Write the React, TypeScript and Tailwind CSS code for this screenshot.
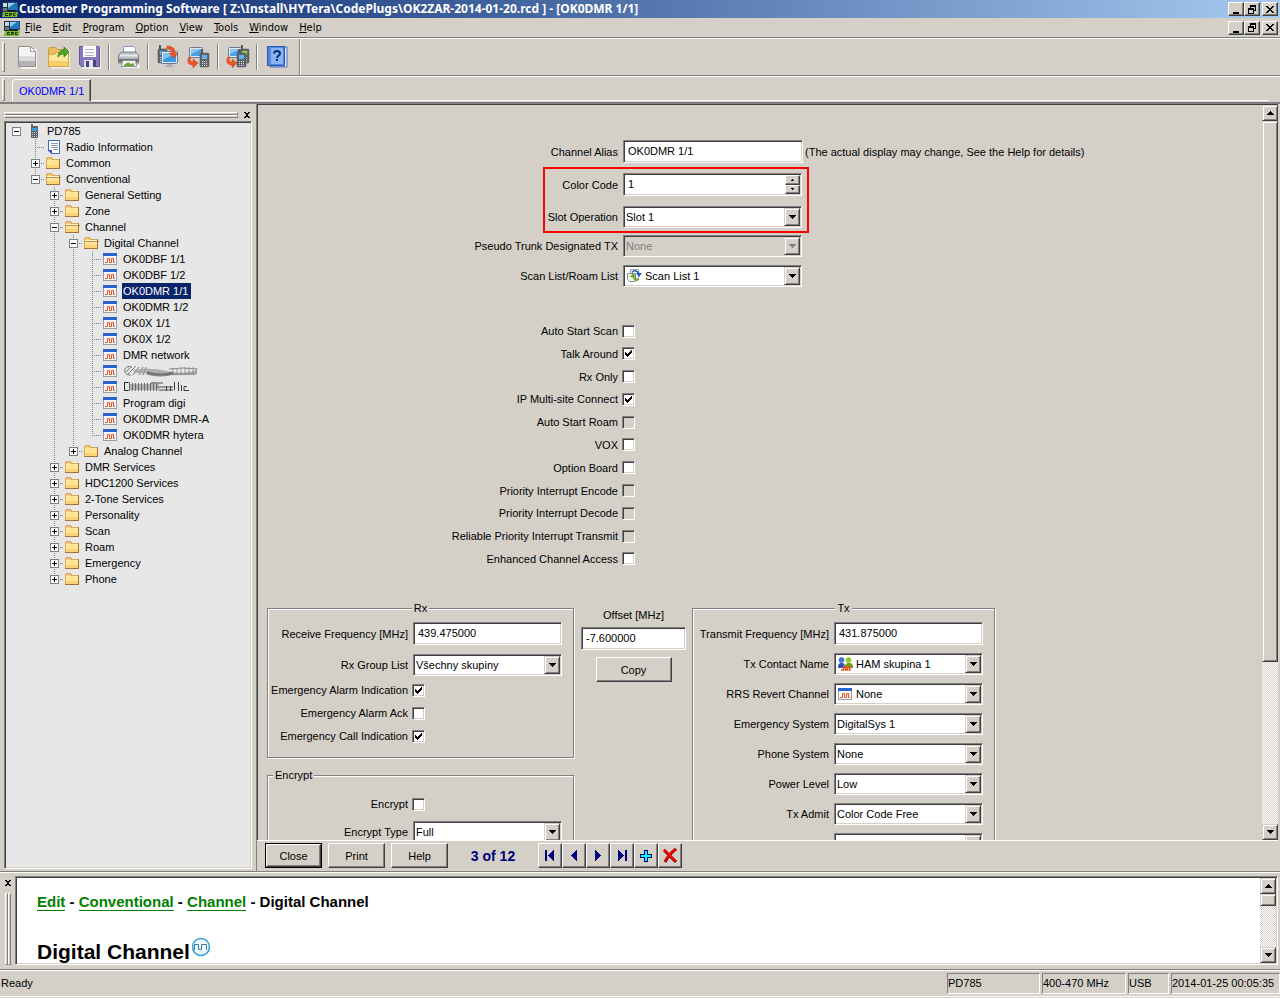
import { useState, type ReactNode } from "react";

const sunken =
  "border border-t-[#808080] border-l-[#808080] border-r-white border-b-white p-px shadow-[inset_1px_1px_0_#404040,inset_-1px_-1px_0_#d4d0c8]";
const raised =
  "bg-[#d4d0c8] border border-t-white border-l-white border-r-[#404040] border-b-[#404040] shadow-[inset_-1px_-1px_0_#808080]";
const scrollPart =
  "bg-[#d4d0c8] border border-t-[#d4d0c8] border-l-[#d4d0c8] border-r-[#404040] border-b-[#404040] shadow-[inset_1px_1px_0_#fff,inset_-1px_-1px_0_#808080]";
const dither = "bg-[repeating-conic-gradient(#ffffff_0_25%,#d4d0c8_0_50%)] bg-[length:2px_2px]";

/* ---------- icons ---------- */

function AppIcon() {
  return (
    <svg width="16" height="16" viewBox="0 0 16 16" className="shrink-0">
      <rect x="5" y="1" width="11" height="9" fill="#2c4f7c" />
      <rect x="6" y="2" width="9" height="7" fill="#1f78b8" />
      <path d="M6 2h7L6 7z" fill="#8fd0f0" />
      <rect x="0" y="1" width="6" height="10" fill="#2b303a" />
      <rect x="1" y="2" width="4" height="4" fill="#b9dcee" />
      <rect x="1" y="7" width="4" height="3" fill="#6d7480" />
      <rect x="6" y="9" width="8" height="2" fill="#12202e" />
      <path d="M1 11h15l-1 5H0z" fill="#7cb82a" />
      <path d="M6 12.500H3.500v2H6M7.500 15v-2.500h2v1.500h-2M13.500 12.500h-2v2h2" stroke="#16300a" fill="none" />
    </svg>
  );
}

function ArrowGlyph({ up = false, muted = false }: { up?: boolean; muted?: boolean }) {
  return (
    <svg width="7" height="4" viewBox="0 0 7 4" shapeRendering="crispEdges">
      <path d={up ? "M3 0h1v1h1v1h1v1h1v1H0V3h1V2h1V1h1z" : "M0 0h7v1H6v1H5v1H4v1H3V3H2V2H1V1H0z"} fill={muted ? "#808080" : "#000"} />
    </svg>
  );
}

function CloseGlyph() {
  return (
    <svg width="8" height="7" viewBox="0 0 8 7" shapeRendering="crispEdges">
      <path d="M0 0h2v1h1v1h2V1h1V0h2v1H7v1H6v1H5v1h1v1h1v1h1v1H6V6H5V5H3v1H2v1H0V6h1V5h1V4h1V3H2V2H1V1H0z" />
    </svg>
  );
}

function SmallX() {
  return (
    <svg width="6" height="6" viewBox="0 0 6 6" shapeRendering="crispEdges">
      <path d="M0 0h2v1h2V0h2v1H5v1H4v2h1v1h1v1H4V5H2v1H0V5h1V4h1V2H1V1H0z" />
    </svg>
  );
}

function NewIcon() {
  return (
    <svg width="22" height="24" viewBox="0 0 22 24">
      <path d="M4 4h16v20H4z" fill="#fff" opacity=".7" />
      <path d="M1.500 1.500h12l5 5v15h-17z" fill="#f4f4f4" stroke="#8e8e8e" />
      <path d="M2 16h16v5H2z" fill="#b4b4b4" />
      <path d="M2 11h16v5H2z" fill="#dcdcdc" />
      <path d="M13.500 1.500v5h5z" fill="#fff" stroke="#9a9a9a" />
    </svg>
  );
}

function OpenIcon() {
  return (
    <svg width="24" height="24" viewBox="0 0 24 24">
      <path d="M4 5h19v19H4z" fill="#fff" opacity=".6" />
      <path d="M1.500 21V4.500l1-2h6l2 2h10V21z" fill="#e8bc5c" stroke="#c79a3c" />
      <path d="M1.500 21.500V9.500h6l2-2h12v14z" fill="#fbe79c" stroke="#d2a445" />
      <path d="M2 16h19v5H2z" fill="#f3cb62" opacity=".8" />
      <path d="M11 12c0-5 3-7 6-7V2l5 5-5 5V9c-2 0-4 0-6 3z" fill="#4fa62b" stroke="#2e7a14" strokeWidth=".8" />
    </svg>
  );
}

function SaveIcon() {
  return (
    <svg width="22" height="24" viewBox="0 0 22 24">
      <path d="M3 4h19v20H3z" fill="#fff" opacity=".6" />
      <path d="M.5 1.500h19l1 1v19H2.500l-2-2z" fill="#8379bd" stroke="#625898" />
      <rect x="4" y="1" width="13" height="11" fill="#fafafc" />
      <path d="M6 4.500h9M6 7.500h9M6 10.500h9" stroke="#b4b4c6" />
      <rect x="5" y="15" width="12" height="7" fill="#e4e2f0" />
      <rect x="7" y="16" width="3" height="6" fill="#4a4088" />
      <rect x="14" y="15" width="3" height="7" fill="#4a4088" />
    </svg>
  );
}

function PrinterIcon() {
  return (
    <svg width="24" height="24" viewBox="0 0 24 24">
      <path d="M4 20h19v3H6z" fill="#fff" opacity=".8" />
      <path d="M6.500 9V1.500h10l2 2V9z" fill="#fff" stroke="#8aa0bd" />
      <path d="M1.500 10l3-3h14l3 3v8h-20z" fill="#b9bcc2" stroke="#7c7f86" />
      <path d="M3 9.500h18v2H3z" fill="#e7e9ec" />
      <path d="M2 14h19v3H2z" fill="#6b6e74" />
      <path d="M5.500 15.500h13l1 6h-15z" fill="#f7f9ee" stroke="#8c9099" />
      <path d="M7 20l4-3 3 2 3-1v3H7z" fill="#6aa53c" />
    </svg>
  );
}

function Radio({ x, y, screen = "#5fb2ea" }: { x: number; y: number; screen?: string }) {
  return (
    <g transform={`translate(${x} ${y})`}>
      <rect x="1" y="0" width="2" height="5" fill="#55595f" />
      <rect x="0" y="4" width="9" height="14" rx="1" fill="#62666d" stroke="#4c4f55" strokeWidth=".5" />
      <rect x="2" y="6" width="5" height="4" fill={screen} />
      <path d="M2 12.500h1m1 0h1m1 0h1M2 14.500h1m1 0h1m1 0h1M2 16.500h1m1 0h1m1 0h1" stroke="#d3d7dc" />
    </g>
  );
}

function ReadIcon() {
  return (
    <svg width="24" height="24" viewBox="0 0 24 24">
      <Radio x={2} y={0} />
      <rect x="5.500" y="6.500" width="16" height="12" rx="1" fill="#e4e9f0" stroke="#5e7ca8" />
      <rect x="7" y="8" width="13" height="9" fill="#3f97e0" />
      <path d="M7 8h13L7 15z" fill="#83c3f2" />
      <path d="M11 19h5v2h2v1H9v-1h2z" fill="#a4adb9" />
      <path d="M11 1c6 0 8 3 8 7h3l-4 5-5-5h3c0-3-2-4-5-4z" fill="#ee5427" stroke="#c23a12" strokeWidth=".5" />
    </svg>
  );
}

function WriteIcon({ twin = false }: { twin?: boolean }) {
  return (
    <svg width="24" height="24" viewBox="0 0 24 24">
      <rect x="2.500" y="2.500" width="13" height="10" rx="1" fill="#e4e9f0" stroke="#6e7c90" />
      <rect x="4" y="4" width="10" height="7" fill="#4b9fe4" />
      <path d="M4 4h10L4 9z" fill="#8ccaf4" />
      {twin && <Radio x={14} y={0} screen="#a8d640" />}
      <Radio x={twin ? 11 : 13} y={4} />
      <path d="M2 12c-3 5 0 8 4 8v3l5-5-5-4v3c-2 0-4-1-2-5z" fill="#ee5427" stroke="#c23a12" strokeWidth=".5" />
    </svg>
  );
}

function HelpIcon() {
  return (
    <svg width="22" height="24" viewBox="0 0 22 24">
      <path d="M18 2h3v20H4v-1h14z" fill="#dfe8f8" stroke="#4a70c0" />
      <rect x="1.500" y="1.500" width="17" height="19" fill="#4f86e0" stroke="#2c57ad" />
      <rect x="5" y="3" width="12" height="16" fill="#8bb4f3" />
      <path d="M8 8.500c0-3.500 6-3.500 6 0 0 2.500-3 2-3 4.500" fill="none" stroke="#0c2a7a" strokeWidth="2" />
      <rect x="10" y="14" width="2" height="2" fill="#0c2a7a" />
    </svg>
  );
}

function FolderIcon({ open = false }: { open?: boolean }) {
  return (
    <svg width="15" height="14" viewBox="0 0 15 14" shapeRendering="crispEdges">
      <path d="M0 13V2h1V1h5v1h1v1h7v10z" fill="#f5d27a" />
      <path d="M.5 12V2.500h1v-1h4v1h1v1h7" fill="none" stroke="#d9a95a" />
      <path d={open ? "M1 6h13v6H1z" : "M1 4h12v8H1z"} fill="#ffe595" />
      {open && <path d="M1 4h12v1H1z" fill="#fff6d0" />}
      {open && <path d="M0 5.500h15" stroke="#c98f45" />}
      <path d="M1 9h12v3H1z" fill="#fbd571" />
      <path d="M0 12.500h14M13.500 3v10" stroke="#a8703a" />
    </svg>
  );
}

function ChannelIcon() {
  return (
    <svg width="15" height="14" viewBox="0 0 15 14">
      <rect x="0" y="1" width="14" height="12" fill="#f6f8fb" />
      <rect x="0" y="1" width="14" height="3" fill="#2a62d0" />
      <path d="M0 4h1v8H0zM0 12h14v1H0zM13 4h1v9h-1z" fill="#9a9aa2" />
      <path d="M2 10.500h2.500v-4h2v4h2v-4h2v4h1.500" fill="none" stroke="#f0521f" />
    </svg>
  );
}

function InfoIcon() {
  return (
    <svg width="15" height="14" viewBox="0 0 15 14" shapeRendering="crispEdges">
      <path d="M2.500.5h11v13h-8l-3-3z" fill="#fff" stroke="#3f6fc4" />
      <path d="M5 3.500h7M5 5.500h7M5 7.500h7M7 9.500h5" stroke="#8f9cb0" />
      <path d="M2 10h4v4H5v-1H4v-1H3v-1H2z" fill="#2a55c0" />
    </svg>
  );
}

function DeviceIcon() {
  return (
    <svg width="15" height="14" viewBox="0 0 15 14" shapeRendering="crispEdges">
      <rect x="4" y="0" width="2" height="4" fill="#6d7075" />
      <rect x="4" y="2" width="7" height="12" fill="#5d6168" />
      <rect x="5" y="4" width="5" height="3" fill="#3f9be0" />
      <path d="M5 8.500h1m1 0h1m1 0h1M5 10.500h1m1 0h1m1 0h1M5 12.500h1m1 0h1m1 0h1" stroke="#c5c9ce" />
    </svg>
  );
}

function ScanIcon() {
  return (
    <svg width="15" height="14" viewBox="0 0 15 14">
      <path d="M3.500.5h8v9h-8z" fill="#fafafa" stroke="#a0a0a0" />
      <path d="M.5 4.500h8v8h-6l-2-2z" fill="#f2f2f2" stroke="#8d8d8d" />
      <path d="M5 3.500q3-4 7 1" fill="none" stroke="#1f57c8" strokeWidth="1.500" />
      <path d="M9 4h6l-3 4z" fill="#1f57c8" />
      <path d="M12 10q-3 3-6-2" fill="none" stroke="#63a81c" strokeWidth="1.500" />
      <path d="M3 8h6L6 4z" fill="#63a81c" />
    </svg>
  );
}

function ContactIcon() {
  return (
    <svg width="15" height="14" viewBox="0 0 15 14">
      <circle cx="3.500" cy="3" r="2.800" fill="#3f74d4" />
      <path d="M0 11c-1-7 8-7 7 0z" fill="#2758b8" />
      <circle cx="10.500" cy="3" r="2.800" fill="#8ccb24" />
      <path d="M7 11c-1-7 9-7 8 0z" fill="#63a313" />
      <path d="M3 13h2.500V9.500h2V13h2V9.500h2V13H13" fill="none" stroke="#f0521f" strokeWidth="1.500" />
    </svg>
  );
}

/* hand-scrubbed names in the tree */
function Smudge({ wide = false }: { wide?: boolean }) {
  return (
    <svg width={wide ? 78 : 68} height="14" viewBox={wide ? "0 0 78 14" : "0 0 68 14"} fill="none">
      {wide ? (
        <>
          <path d="M9 3C0 0-1 12 8 11M3 8l5-5M5 10l8-8M10 11l6-8M16 11l4-8M20 11l3-8" stroke="#777" />
          <path d="M10 6q18-3 34 1t30-1v4q-14 2-28 1T12 9z" fill="#a0a0a0" opacity=".8" />
          <path d="M24 9q14 4 26 0" stroke="#555" strokeWidth="3" opacity=".7" />
          <path d="M46 5q14-2 28 0M48 10h24" stroke="#8a8a8a" />
          <path d="M50 4v7M54 4v7M58 3v8M62 3v8M66 3v8M70 3v8M74 4l-2 7" stroke="#888" opacity=".8" />
        </>
      ) : (
        <>
          <path d="M6 4h30v6H6z" fill="#b4b4b4" />
          <path d="M1.500 2.500v8h4M1.500 2.500h4" stroke="#222" />
          <path d="M6.500 2v9M9.500 3v8M12.500 3v8M15.500 3v8M18.500 3v8M21.500 3v8M24.500 3v8M27.500 3v8M30.500 2v9M33.500 3v8" stroke="#6a6a6a" />
          <path d="M28 3h12M34 7h16M36 10h14" stroke="#777" strokeWidth="2" opacity=".7" />
          <path d="M43.500 6v5M47.500 6v5M51.500 2v8M55.500 2v9M58.500 5v6M64 6.500h-3v4h5" stroke="#3a3a3a" />
        </>
      )}
    </svg>
  );
}

/* ---------- small controls ---------- */

function ComboBox({
  id,
  value,
  icon,
  disabled = false,
}: {
  id: string;
  value: string;
  icon?: ReactNode;
  disabled?: boolean;
}) {
  return (
    <div className={`flex h-[22px] w-full ${sunken} ${disabled ? "bg-[#d4d0c8]" : "bg-white"}`}>
      {icon && <span className="flex items-center pl-[2px]">{icon}</span>}
      <select
        id={id}
        disabled={disabled}
        className={`min-w-0 flex-1 appearance-none bg-transparent outline-none disabled:text-[#808080] disabled:opacity-100 ${icon ? "pl-[3px]" : "pl-px"}`}
      >
        <option>{value}</option>
      </select>
      <span className={`pointer-events-none flex w-4 items-center justify-center ${scrollPart}`}>
        <ArrowGlyph muted={disabled} />
      </span>
    </div>
  );
}

function TextBox({ id, value }: { id: string; value: string }) {
  return <input id={id} type="text" defaultValue={value} className={`block h-[23px] w-full bg-white pb-[2px] outline-none ${sunken} pl-1`} />;
}

function CheckBox({ id, checked = false, disabled = false }: { id: string; checked?: boolean; disabled?: boolean }) {
  return (
    <span className="relative block size-[13px] shrink-0">
      <input
        id={id}
        type="checkbox"
        defaultChecked={checked}
        disabled={disabled}
        className={`peer block size-[13px] appearance-none bg-white disabled:bg-[#d4d0c8] ${sunken}`}
      />
      <svg
        viewBox="0 0 7 7"
        shapeRendering="crispEdges"
        className="pointer-events-none absolute top-[3px] left-[3px] hidden size-[7px] peer-checked:block"
      >
        <path d="M0 2h1v1h1v1h1V3h1V2h1V1h1V0h1v3H6v1H5v1H4v1H3v1H2V6H1V5H0z" />
      </svg>
    </span>
  );
}

function Grip() {
  return <span className="w-[3px] border border-t-white border-l-white border-r-[#808080] border-b-[#808080]" />;
}

function WindowButtons() {
  return (
    <div className="flex h-[14px]">
      <button aria-label="Minimize" className={`flex w-4 items-end justify-center pb-px ${raised}`}>
        <span className="h-[2px] w-[6px] bg-black" />
      </button>
      <button aria-label="Restore" className={`flex w-4 items-center justify-center ${raised}`}>
        <svg width="8" height="9" viewBox="0 0 8 9" shapeRendering="crispEdges">
          <path d="M2 0h6v6H6V5h1V2H3v1H2zM0 3h6v6H0zM1 5v3h4V5z" fillRule="evenodd" />
        </svg>
      </button>
      <button aria-label="Close" className={`ml-[2px] flex w-4 items-center justify-center ${raised}`}>
        <CloseGlyph />
      </button>
    </div>
  );
}

function ScrollBar({ thumb }: { thumb: string }) {
  return (
    <div className={`flex w-4 shrink-0 flex-col ${dither}`}>
      <button aria-label="Scroll up" className={`flex h-4 shrink-0 items-center justify-center ${scrollPart}`}>
        <ArrowGlyph up />
      </button>
      <div className="min-h-0 flex-1">
        <div className={`${thumb} ${scrollPart}`} />
      </div>
      <button aria-label="Scroll down" className={`flex h-4 shrink-0 items-center justify-center ${scrollPart}`}>
        <ArrowGlyph />
      </button>
    </div>
  );
}

/* ---------- bars ---------- */

const menus = ["File", "Edit", "Program", "Option", "View", "Tools", "Window", "Help"];

function MenuBar() {
  return (
    <div className="flex h-5 items-center border-b border-[#808080] pr-[2px] pl-1">
      <AppIcon />
      <nav className="flex flex-1 gap-px font-['DejaVu_Sans_Condensed','Noto_Sans',sans-serif]">
        {menus.map((m) => (
          <button key={m} className="px-[5px]">
            <span className="underline">{m[0]}</span>
            {m.slice(1)}
          </button>
        ))}
      </nav>
      <WindowButtons />
    </div>
  );
}

function ToolButton({ label, children }: { label: string; children: ReactNode }) {
  return (
    <button aria-label={label} className="flex w-[31px] justify-center">
      {children}
    </button>
  );
}

function ToolSeparator() {
  return <span className="mx-[3px] h-[26px] w-[2px] border-l border-[#808080] bg-white" />;
}

function ToolBar() {
  return (
    <div className="flex h-[38px] border-t border-b border-t-white border-b-[#808080]">
      <div className="flex items-center border-r border-[#808080] pr-[7px] pl-[2px] shadow-[1px_0_0_#fff]">
        <span className="flex h-[30px]">
          <Grip />
        </span>
        <span className="w-[7px]" />
        <ToolButton label="New"><NewIcon /></ToolButton>
        <ToolButton label="Open"><OpenIcon /></ToolButton>
        <ToolButton label="Save"><SaveIcon /></ToolButton>
        <ToolSeparator />
        <ToolButton label="Print"><PrinterIcon /></ToolButton>
        <ToolSeparator />
        <ToolButton label="Read from radio"><ReadIcon /></ToolButton>
        <ToolButton label="Write to radio"><WriteIcon /></ToolButton>
        <ToolSeparator />
        <ToolButton label="Clone"><WriteIcon twin /></ToolButton>
        <ToolSeparator />
        <ToolButton label="Help"><HelpIcon /></ToolButton>
      </div>
    </div>
  );
}

function TabBar() {
  return (
    <div className="flex h-7 border-t border-b-2 border-t-white border-b-[#808080] pt-[2px] pl-[2px]">
      <span className="flex h-[22px]">
        <Grip />
      </span>
      <button className="ml-[7px] h-[22px] rounded-tl-sm border border-t-white border-r-[#404040] border-b-0 border-l-white px-[6px] text-[#0000ff] shadow-[inset_-1px_0_0_#808080]">
        OK0DMR 1/1
      </button>
      <span className="mr-3 h-[22px] flex-1 border-b border-white" />
    </div>
  );
}

/* ---------- tree ---------- */

type Node = {
  name: string;
  kind: "device" | "info" | "folder" | "channel";
  open?: boolean;
  smudge?: "wide" | "narrow";
  children?: Node[];
};

const channel = (name: string): Node => ({ name, kind: "channel" });
const folder = (name: string): Node => ({ name, kind: "folder", children: [] });

const root: Node = {
  name: "PD785",
  kind: "device",
  open: true,
  children: [
    { name: "Radio Information", kind: "info" },
    folder("Common"),
    {
      name: "Conventional",
      kind: "folder",
      open: true,
      children: [
        folder("General Setting"),
        folder("Zone"),
        {
          name: "Channel",
          kind: "folder",
          open: true,
          children: [
            {
              name: "Digital Channel",
              kind: "folder",
              open: true,
              children: [
                channel("OK0DBF 1/1"),
                channel("OK0DBF 1/2"),
                channel("OK0DMR 1/1"),
                channel("OK0DMR 1/2"),
                channel("OK0X 1/1"),
                channel("OK0X 1/2"),
                channel("DMR network"),
                { name: "hidden 1", kind: "channel", smudge: "wide" },
                { name: "hidden 2", kind: "channel", smudge: "narrow" },
                channel("Program digi"),
                channel("OK0DMR DMR-A"),
                channel("OK0DMR hytera"),
              ],
            },
            folder("Analog Channel"),
          ],
        },
        folder("DMR Services"),
        folder("HDC1200 Services"),
        folder("2-Tone Services"),
        folder("Personality"),
        folder("Scan"),
        folder("Roam"),
        folder("Emergency"),
        folder("Phone"),
      ],
    },
  ],
};

function NodeIcon({ node }: { node: Node }) {
  if (node.kind === "device") return <DeviceIcon />;
  if (node.kind === "info") return <InfoIcon />;
  if (node.kind === "channel") return <ChannelIcon />;
  return <FolderIcon open={node.open} />;
}

function Branch({ node, last, depth }: { node: Node; last: boolean; depth: number }) {
  const box = node.children !== undefined;
  return (
    <svg width="19" height="16" viewBox="0 0 19 16" shapeRendering="crispEdges" className="shrink-0">
      {depth > 0 && (
        <g stroke="#808080" strokeDasharray="1 1">
          <path d={last ? "M9.500 0v8" : "M9.500 0v16"} />
          <path d="M9 8.500h10" />
        </g>
      )}
      {box && (
        <>
          <rect x="5.500" y="4.500" width="8" height="8" fill="#fff" stroke="#808080" />
          <path d={node.open ? "M7 8.500h5" : "M7 8.500h5M9.500 6v5"} stroke="#000" />
        </>
      )}
    </svg>
  );
}

function TreeNode({ node, lines, last, selected, onSelect }: {
  node: Node;
  lines: boolean[];
  last: boolean;
  selected: string;
  onSelect: (name: string) => void;
}) {
  return (
    <li>
      <div className="flex h-4 items-center">
        {lines.map((line, i) => (
          <svg key={i} width="19" height="16" viewBox="0 0 19 16" shapeRendering="crispEdges" className="shrink-0">
            {line && <path d="M9.500 0v16" stroke="#808080" strokeDasharray="1 1" />}
          </svg>
        ))}
        <Branch node={node} last={last} depth={lines.length} />
        <span className="ml-px w-[15px]">
          <NodeIcon node={node} />
        </span>
        <button
          onClick={() => onSelect(node.name)}
          aria-label={node.name}
          className={`ml-1 h-4 pr-[3px] pl-px whitespace-nowrap ${selected === node.name ? "bg-[#0a246a] text-white" : ""}`}
        >
          {node.smudge ? <Smudge wide={node.smudge === "wide"} /> : node.name}
        </button>
      </div>
      {node.open && node.children && (
        <ul>
          {node.children.map((c, i) => (
            <TreeNode
              key={c.name}
              node={c}
              lines={[...lines, lines.length > 0 && !last]}
              last={i === node.children!.length - 1}
              selected={selected}
              onSelect={onSelect}
            />
          ))}
        </ul>
      )}
    </li>
  );
}

function TreePanel() {
  const [selected, setSelected] = useState("OK0DMR 1/1");
  return (
    <aside className="flex w-64 shrink-0 flex-col px-1 pt-1 pb-[2px]">
      <div className="flex h-[13px] items-center">
        <div className="flex flex-1 flex-col">
          <span className="h-[3px] border border-t-white border-l-white border-r-[#808080] border-b-[#808080]" />
          <span className="h-[3px] border border-t-white border-l-white border-r-[#808080] border-b-[#808080]" />
        </div>
        <button aria-label="Close panel" className="mr-[2px] ml-[6px]">
          <SmallX />
        </button>
      </div>
      <div className={`min-h-0 flex-1 overflow-hidden bg-[#e7e7e7] ${sunken}`}>
        <ul className="pl-px">
          <TreeNode node={root} lines={[]} last selected={selected} onSelect={setSelected} />
        </ul>
      </div>
    </aside>
  );
}

/* ---------- form ---------- */

function Field({ id, label, labelWidth, width, children }: {
  id: string;
  label: string;
  labelWidth: string;
  width: string;
  children: ReactNode;
}) {
  return (
    <div className="flex items-center gap-[5px]">
      <label htmlFor={id} className={`shrink-0 text-right whitespace-nowrap ${labelWidth}`}>
        {label}
      </label>
      <div className={`shrink-0 ${width}`}>{children}</div>
    </div>
  );
}

function CheckRow({ id, label, labelWidth, checked, disabled }: {
  id: string;
  label: string;
  labelWidth: string;
  checked?: boolean;
  disabled?: boolean;
}) {
  return (
    <div className="flex items-center gap-1">
      <label htmlFor={id} className={`shrink-0 text-right whitespace-nowrap ${labelWidth}`}>
        {label}
      </label>
      <CheckBox id={id} checked={checked} disabled={disabled} />
    </div>
  );
}

const options = [
  { label: "Auto Start Scan" },
  { label: "Talk Around", checked: true },
  { label: "Rx Only" },
  { label: "IP Multi-site Connect", checked: true },
  { label: "Auto Start Roam", disabled: true },
  { label: "VOX" },
  { label: "Option Board" },
  { label: "Priority Interrupt Encode", disabled: true },
  { label: "Priority Interrupt Decode", disabled: true },
  { label: "Reliable Priority Interrupt Transmit", disabled: true },
  { label: "Enhanced Channel Access" },
];

const txFields = [
  { label: "Tx Contact Name", value: "HAM skupina 1", icon: <ContactIcon /> },
  { label: "RRS Revert Channel", value: "None", icon: <ChannelIcon /> },
  { label: "Emergency System", value: "DigitalSys 1" },
  { label: "Phone System", value: "None" },
  { label: "Power Level", value: "Low" },
  { label: "Tx Admit", value: "Color Code Free" },
  { label: "", value: "" },
];

const group = "border border-[#808080] shadow-[inset_1px_1px_0_#fff,1px_1px_0_#fff]";

function ChannelForm() {
  return (
    <form className="min-w-0 flex-1 overflow-hidden pt-[35px]">
      <div className="flex items-center gap-[2px]">
        <Field id="alias" label="Channel Alias" labelWidth="w-[360px]" width="w-[180px]">
          <TextBox id="alias" value="OK0DMR 1/1" />
        </Field>
        <span className="whitespace-nowrap">(The actual display may change, See the Help for details)</span>
      </div>

      <div className="mt-1 ml-[285px] flex w-[266px] flex-col gap-[10px] border-2 border-[#ff0000] pt-1 pb-[3px]">
        <Field id="color" label="Color Code" labelWidth="w-[73px]" width="w-[179px]">
          <div className={`flex h-[23px] bg-white ${sunken}`}>
            <input id="color" type="text" defaultValue="1" className="min-w-0 flex-1 pb-[2px] pl-[3px] outline-none" />
            <div className="flex w-[15px] flex-col">
              <button type="button" aria-label="Increase" className={`flex flex-1 items-center justify-center ${raised}`}>
                <svg width="3" height="2" viewBox="0 0 3 2" shapeRendering="crispEdges"><path d="M1 0h1v1h1v1H0V1h1z" /></svg>
              </button>
              <button type="button" aria-label="Decrease" className={`flex flex-1 items-center justify-center ${raised}`}>
                <svg width="3" height="2" viewBox="0 0 3 2" shapeRendering="crispEdges"><path d="M0 0h3v1H2v1H1V1H0z" /></svg>
              </button>
            </div>
          </div>
        </Field>
        <Field id="slot" label="Slot Operation" labelWidth="w-[73px]" width="w-[179px]">
          <ComboBox id="slot" value="Slot 1" />
        </Field>
      </div>

      <div className="mt-[2px] flex flex-col gap-2">
        <Field id="trunk" label="Pseudo Trunk Designated TX" labelWidth="w-[360px]" width="w-[179px]">
          <ComboBox id="trunk" value="None" disabled />
        </Field>
        <Field id="scan" label="Scan List/Roam List" labelWidth="w-[360px]" width="w-[179px]">
          <ComboBox id="scan" value="Scan List 1" icon={<ScanIcon />} />
        </Field>
      </div>

      <div className="mt-[37px] flex h-[242px] flex-col justify-between">
        {options.map((o) => (
          <CheckRow key={o.label} id={o.label} labelWidth="w-[360px]" {...o} />
        ))}
      </div>

      <div className="mt-9 flex items-start pl-[9px]">
        <div className="w-[307px] shrink-0">
          <fieldset className={`pb-[14px] ${group}`}>
            <legend className="mx-auto bg-[#d4d0c8] px-[2px] leading-[13px]">Rx</legend>
            <div className="flex flex-col gap-[9px] pt-[7px]">
              <Field id="rxf" label="Receive Frequency [MHz]" labelWidth="w-[140px]" width="w-[149px]">
                <TextBox id="rxf" value="439.475000" />
              </Field>
              <Field id="rxg" label="Rx Group List" labelWidth="w-[140px]" width="w-[149px]">
                <ComboBox id="rxg" value="Všechny skupiny" />
              </Field>
            </div>
            <div className="mt-[7px] flex flex-col gap-[9px]">
              <CheckRow id="eai" label="Emergency Alarm Indication" labelWidth="w-[140px]" checked />
              <CheckRow id="eaa" label="Emergency Alarm Ack" labelWidth="w-[140px]" />
              <CheckRow id="eci" label="Emergency Call Indication" labelWidth="w-[140px]" checked />
            </div>
          </fieldset>
          <fieldset className={`mt-[11px] h-[140px] ${group}`}>
            <legend className="ml-[5px] bg-[#d4d0c8] px-[2px] leading-[13px]">Encrypt</legend>
            <div className="flex flex-col gap-[10px] pt-[15px]">
              <CheckRow id="enc" label="Encrypt" labelWidth="w-[140px]" />
              <Field id="enct" label="Encrypt Type" labelWidth="w-[140px]" width="w-[149px]">
                <ComboBox id="enct" value="Full" />
              </Field>
            </div>
          </fieldset>
        </div>

        <div className="ml-[7px] flex w-[105px] shrink-0 flex-col items-center pt-[6px]">
          <label htmlFor="offset">Offset [MHz]</label>
          <div className="mt-[5px] w-full">
            <TextBox id="offset" value="-7.600000" />
          </div>
          <button type="button" className={`mt-[7px] h-[25px] w-[76px] ${raised}`}>Copy</button>
        </div>

        <fieldset className={`ml-[6px] h-[330px] w-[303px] shrink-0 ${group}`}>
          <legend className="mx-auto bg-[#d4d0c8] px-[2px] leading-[13px]">Tx</legend>
          <div className="flex flex-col gap-2 pt-[7px]">
            <Field id="txf" label="Transmit Frequency [MHz]" labelWidth="w-[136px]" width="w-[149px]">
              <TextBox id="txf" value="431.875000" />
            </Field>
            {txFields.map((f, i) => (
              <Field key={i} id={`tx${i}`} label={f.label} labelWidth="w-[136px]" width="w-[149px]">
                <ComboBox id={`tx${i}`} value={f.value} icon={f.icon} />
              </Field>
            ))}
          </div>
        </fieldset>
      </div>
    </form>
  );
}

function RecordBar() {
  const nav = `flex w-6 items-center justify-center ${raised}`;
  return (
    <div className="flex h-[31px] border-t border-white pt-[2px] pb-[3px] pl-2">
      <div className="flex gap-[6px]">
        <button className="w-[57px] border border-black">
          <span className={`flex h-full items-center justify-center ${raised}`}>Close</span>
        </button>
        <button className={`w-[57px] ${raised}`}>Print</button>
        <button className={`w-[57px] ${raised}`}>Help</button>
      </div>
      <span className="flex w-[90px] items-center justify-center text-[14px] font-bold text-[#000080]">3 of 12</span>
      <div className="flex">
        <button aria-label="First" className={nav}>
          <svg width="10" height="11" viewBox="0 0 10 11" fill="#000080" shapeRendering="crispEdges"><path d="M0 0h2v11H0zM9 0v11L3 6V5z" /></svg>
        </button>
        <button aria-label="Previous" className={nav}>
          <svg width="6" height="11" viewBox="0 0 6 11" fill="#000080" shapeRendering="crispEdges"><path d="M6 0v11L0 6V5z" /></svg>
        </button>
        <button aria-label="Next" className={nav}>
          <svg width="6" height="11" viewBox="0 0 6 11" fill="#000080" shapeRendering="crispEdges"><path d="M0 0v11l6-5V5z" /></svg>
        </button>
        <button aria-label="Last" className={nav}>
          <svg width="10" height="11" viewBox="0 0 10 11" fill="#000080" shapeRendering="crispEdges"><path d="M8 0h2v11H8zM1 0v11l6-5V5z" /></svg>
        </button>
        <button aria-label="Add" className={nav}>
          <svg width="12" height="12" viewBox="0 0 12 12" shapeRendering="crispEdges">
            <path d="M4.500.5h3v4h4v3h-4v4h-3v-4h-4v-3h4z" fill="#00ffff" stroke="#000080" />
          </svg>
        </button>
        <button aria-label="Delete" className={nav}>
          <svg width="15" height="15" viewBox="0 0 15 15" fill="none">
            <path d="M1 2l12 12M13 1Q6 6 2 14" stroke="#7a0000" strokeWidth="3" />
            <path d="M1 1.500l12 12M13 1Q6 6 2 13" stroke="#ff0000" strokeWidth="2" />
          </svg>
        </button>
      </div>
    </div>
  );
}

/* ---------- help + status ---------- */

function HelpPane() {
  const link = "border-b border-[#008000] text-[#008000]";
  return (
    <section className="flex h-[98px] border-t border-t-[#808080] shadow-[inset_0_1px_0_#fff] pt-1 pr-[2px] pb-1">
      <div className="flex w-[15px] flex-col items-center pt-1">
        <button aria-label="Close help">
          <SmallX />
        </button>
        <div className="mt-[7px] flex flex-1">
          <Grip />
          <Grip />
        </div>
      </div>
      <div className={`flex min-w-0 flex-1 bg-white ${sunken}`}>
        <div className="flex-1 overflow-hidden pt-4 pl-5">
          <p className="text-[15px] leading-4 font-bold whitespace-nowrap">
            <a href="#edit" className={link}>Edit</a> - <a href="#conventional" className={link}>Conventional</a> -{" "}
            <a href="#channel" className={link}>Channel</a> - Digital Channel
          </p>
          <h1 className="mt-[27px] flex items-start gap-px text-[21px] leading-6 font-bold">
            <span className="pt-[3px]">Digital Channel</span>
            <svg width="20" height="20" viewBox="0 0 20 20" fill="none">
              <circle cx="10" cy="10" r="8.500" stroke="#2f9fd0" fill="#eef8fd" strokeWidth="1.500" />
              <path d="M3.500 13V7.500h4v5h3v-5h5V13" stroke="#3a78b4" />
            </svg>
          </h1>
        </div>
        <ScrollBar thumb="h-3" />
      </div>
    </section>
  );
}

function StatusBar() {
  const cell = "h-[21px] border border-t-[#808080] border-l-[#808080] border-r-white border-b-white leading-[19px] whitespace-nowrap";
  return (
    <footer className="h-[29px] border-t border-[#808080] shadow-[inset_0_1px_0_#fff]">
      <div className="flex h-[27px] items-center gap-[2px] border-b border-white pl-px">
        <span className="flex-1">Ready</span>
        <span className={`w-[93px] ${cell}`}>PD785</span>
        <span className={`w-[84px] ${cell}`}>400-470 MHz</span>
        <span className={`w-[41px] ${cell}`}>USB</span>
        <span className={`w-[109px] ${cell}`}>2014-01-25 00:05:35</span>
      </div>
    </footer>
  );
}

export default function App() {
  return (
    <div className="flex h-screen flex-col overflow-hidden bg-[#d4d0c8] font-['Liberation_Sans',Arial,sans-serif] text-[11px] leading-[14px] text-black">
      <header>
        <div className="flex h-[18px] items-center bg-linear-to-r from-[#0a246a] to-[#a6caf0] pr-[2px] pl-[2px]">
          <AppIcon />
          <h1 className="ml-px flex-1 font-['Noto_Sans','DejaVu_Sans_Condensed',sans-serif] text-[12px] font-bold whitespace-nowrap text-white">
            Customer Programming Software [ Z:\Install\HYTera\CodePlugs\OK2ZAR-2014-01-20.rcd ] - [OK0DMR 1/1]
          </h1>
          <WindowButtons />
        </div>
        <MenuBar />
        <ToolBar />
        <TabBar />
      </header>
      <div className="flex min-h-0 flex-1">
        <TreePanel />
        <main className="flex min-w-0 flex-1 flex-col border-l border-[#808080] pr-[2px]">
          <div className="flex min-h-0 flex-1 border-t border-l border-[#404040]">
            <ChannelForm />
            <ScrollBar thumb="h-[77%]" />
          </div>
          <RecordBar />
        </main>
      </div>
      <HelpPane />
      <StatusBar />
    </div>
  );
}
